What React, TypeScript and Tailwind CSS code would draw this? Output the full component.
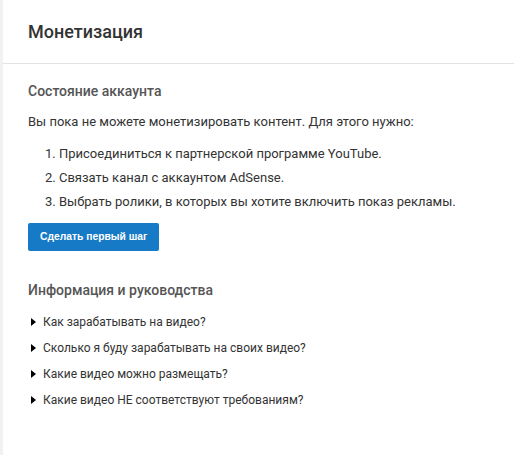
import React from 'react';

const steps = [
    'Присоединиться к партнерской программе YouTube.',
    'Связать канал с аккаунтом AdSense.',
    'Выбрать ролики, в которых вы хотите включить показ рекламы.',
];

const guides = [
    'Как зарабатывать на видео?',
    'Сколько я буду зарабатывать на своих видео?',
    'Какие видео можно размещать?',
    'Какие видео НЕ соответствуют требованиям?',
];

const App: React.FC = () => {
    return (
        <div className="flex min-h-[455px] w-[514px] bg-[#f1f1f1] font-['Roboto',sans-serif]">
            <div className="ml-[3px] flex-1 bg-white">
                {/* Header */}
                <div className="flex h-[64px] items-center border-b border-[#e2e2e2] px-[25px]">
                    <h1 className="text-[18px] font-medium text-[#333]">Монетизация</h1>
                </div>

                <div className="px-[25px] pt-[17px]">
                    {/* Account status */}
                    <h2 className="text-[14px] font-medium leading-[20px] text-[#555]">Состояние аккаунта</h2>
                    <p className="mt-[12px] text-[13px] leading-[18px] text-[#333]">
                        Вы пока не можете монетизировать контент. Для этого нужно:
                    </p>
                    <ol className="mt-[14px] flex flex-col gap-[6px] pl-[17px] text-[13px] leading-[18px] text-[#333]">
                        {steps.map((s, i) => (
                            <li key={i}>
                                {i + 1}. {s}
                            </li>
                        ))}
                    </ol>
                    <button className="mt-[12px] h-[28px] rounded-[2px] bg-[#167ac6] px-[12px] font-['Liberation_Sans',Arial,sans-serif] text-[10.3px] font-bold text-white">
                        Сделать первый шаг
                    </button>

                    {/* Guides */}
                    <h2 className="mt-[29px] text-[14px] font-medium leading-[20px] text-[#555]">Информация и руководства</h2>
                    <ul className="mt-[9px] flex flex-col">
                        {guides.map((g) => (
                            <li
                                key={g}
                                className="flex h-[26px] items-center gap-[7px] pl-[3px] text-[12px] text-[#333]"
                            >
                                <span className="h-0 w-0 border-y-[4px] border-l-[5px] border-y-transparent border-l-black" />
                                {g}
                            </li>
                        ))}
                    </ul>
                </div>
            </div>
        </div>
    );
};

export default App;
